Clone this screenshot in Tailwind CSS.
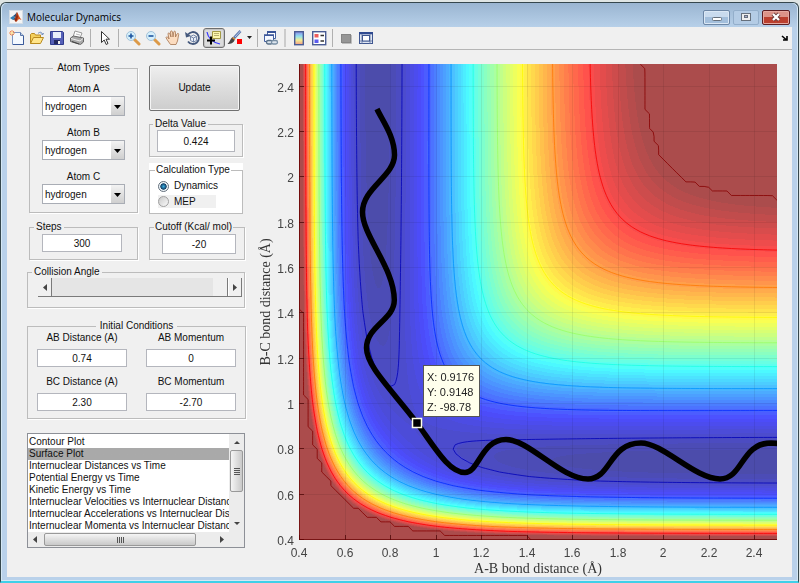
<!DOCTYPE html>
<html lang="en">
  <head>
    <meta charset="UTF-8" />
    <meta name="viewport" content="width=device-width, initial-scale=1.0" />
    <title>Molecular Dynamics</title>
    <script src="https://cdn.jsdelivr.net/npm/@tailwindcss/browser@4"></script>
  </head>
  <body class="bg-[#dfe5e4] font-['Liberation_Sans',Arial,sans-serif] text-[10px] leading-[14px] text-[#111]">
    <div class="flex h-screen flex-col pt-[2px] pr-px">
      <div class="flex flex-1 flex-col rounded-t-md border border-b-2 border-[#35474d] border-b-[#3fd0e8] bg-[#b9d1ea] px-[6px] pb-1 shadow-[inset_0_0_0_1px_#d5e8f5]">
        <!-- Title bar -->
        <header class="-mx-[5px] flex h-6 shrink-0 items-center gap-1 rounded-t-md bg-linear-to-b from-[#9ab5d1] to-[#b7d0e9] px-[7px] pt-[4px]">
          <svg class="h-[14px] w-[14px]" viewBox="0 0 14 14">
            <rect x=".5" y=".5" width="13" height="13" fill="#f4f4f4" stroke="#d5dde5" />
            <path d="M1 8l3-2 2 1-2 3z" fill="#2f7fb5" />
            <path d="M4 6l2-1.500L8 2l-1 5-1.500 3L4 10l2-3z" fill="#274d78" />
            <path d="M8 2c1.500 2 2 5 4.500 8L10 9l-3 3-1.500-2z" fill="#d9541e" />
            <path d="M8 2l1 5-2 5-1.500-2L7 7z" fill="#8e2a12" />
          </svg>
          <h1 class="grow font-['Open_Sans',sans-serif] text-[10px] text-black">Molecular Dynamics</h1>
          <div class="flex gap-[3px]">
            <button aria-label="Minimize" class="flex h-[15px] w-[27px] items-center justify-center rounded-xs border border-[#6d87a6] bg-linear-to-b from-[#c9dbee] from-50% to-[#a3bfdc] to-50% shadow-[inset_0_0_0_1px_#dbe8f5]">
              <svg class="h-[10px] w-3" viewBox="0 0 12 10"><rect x="1.500" y="5.500" width="9" height="3" rx="1" fill="#fff" stroke="#66707c" /></svg>
            </button>
            <button aria-label="Maximize" class="flex h-[15px] w-[26px] items-center justify-center rounded-xs border border-[#93aeca] bg-[#b4cce5]">
              <svg class="h-[10px] w-3" viewBox="0 0 12 10"><rect x="1.500" y="1.500" width="9" height="7" fill="#eee" stroke="#66707c" /><rect x="4.500" y="3.500" width="3" height="2" fill="#aac" stroke="#66707c" /></svg>
            </button>
            <button aria-label="Close" class="flex h-[15px] w-7 items-center justify-center rounded-xs border border-[#5c1d22] bg-linear-to-b from-[#dc9388] from-50% to-[#bb3f2e] to-50% shadow-[inset_0_0_0_1px_#e5a89f]">
              <svg class="h-[10px] w-3" viewBox="0 0 12 10"><path d="M3 2l6 6M9 2L3 8" stroke="#6a3a3a" stroke-width="4" /><path d="M3 2l6 6M9 2L3 8" stroke="#fff" stroke-width="2.300" /></svg>
            </button>
          </div>
        </header>

        <main class="flex min-h-0 flex-1 flex-col bg-[#f0f0f0]">
          <!-- Toolbar -->
          <nav class="flex h-[23px] shrink-0 items-center border-b border-[#b5b5b5]" aria-label="Tools">
            <button aria-label="New" class="flex h-5 w-5 items-center justify-center">
              <svg class="h-4 w-4" viewBox="0 0 16 16"><path d="M3.500 2.500h8l3 3v9h-11z" fill="#f4f9ff" stroke="#7a95c4" /><path d="M11.500 2.500v3h3" fill="#bcd" stroke="#5874a8" /><path d="M14.500 6v8.500H4" fill="none" stroke="#3b5a9a" /><path d="M3 0v6M0 3h6M1 1l4 4M5 1L1 5" stroke="#ee8a55" /><circle cx="3" cy="3" r="1.200" fill="#ffe8a0" /></svg>
            </button>
            <button aria-label="Open" class="flex h-5 w-5 items-center justify-center">
              <svg class="h-4 w-4" viewBox="0 0 16 16"><path d="M1.500 13.500v-9l1-1h3l1 1.500h5v3" fill="#f3cf5b" stroke="#b98a1f" /><path d="M1.500 13.500l3-6h10l-3 6z" fill="#ffe58a" stroke="#b98a1f" /><path d="M9 3.500c2-2 4-1.500 4.500 1M12 3.500l1.500 1.500 1-2" fill="none" stroke="#6a87b8" /></svg>
            </button>
            <button aria-label="Save" class="flex h-5 w-5 items-center justify-center">
              <svg class="h-4 w-4" viewBox="0 0 16 16"><path d="M1.500 1.500h12l1 1v12h-13z" fill="#5560b8" stroke="#303c8c" /><path d="M4 2h8v6H4z" fill="#e8effa" /><path d="M5 10h6v4H5z" fill="#23295f" /><path d="M9 11h2v3H9z" fill="#eee" /></svg>
            </button>
            <button aria-label="Print" class="flex h-5 w-5 items-center justify-center">
              <svg class="h-4 w-4" viewBox="0 0 16 16"><path d="M4 7l2-6 7 2-2 5z" fill="#fff" stroke="#999" /><path d="M1.500 8l3-2 10 2v4l-3 2.500-10-3z" fill="#a9a9a9" stroke="#666" /><path d="M2 8.500l9 2.500 3-2.500" fill="none" stroke="#ededed" /><path d="M3 11.500l7 2.500" stroke="#444" /><path d="M7 4l4 1" stroke="#bbb" /></svg>
            </button>
            <span class="mx-[3px] h-[18px] w-px bg-[#b0b0b0]"></span>
            <button aria-label="Select" class="flex h-5 w-5 items-center justify-center">
              <svg class="h-4 w-4" viewBox="0 0 16 16"><path d="M5.500 1.500v11l2.700-2.500 2 4.500 1.800-1-2-4.300h3.500z" fill="#fff" stroke="#333" /></svg>
            </button>
            <span class="mx-1 h-[18px] w-px bg-[#b0b0b0]"></span>
            <button aria-label="Zoom in" class="flex h-5 w-5 items-center justify-center">
              <svg class="h-4 w-4" viewBox="0 0 16 16"><path d="M9.500 9.500l4.500 4.500" stroke="#dc9a48" stroke-width="3" stroke-linecap="round" /><circle cx="6" cy="6" r="4.500" fill="#d6f0fb" stroke="#a3c2da" /><path d="M3.500 6h5M6 3.500v5" stroke="#1e55a0" stroke-width="1.600" /></svg>
            </button>
            <button aria-label="Zoom out" class="flex h-5 w-5 items-center justify-center">
              <svg class="h-4 w-4" viewBox="0 0 16 16"><path d="M9.500 9.500l4.500 4.500" stroke="#dc9a48" stroke-width="3" stroke-linecap="round" /><circle cx="6" cy="6" r="4.500" fill="#d6f0fb" stroke="#a3c2da" /><path d="M3.500 6h5" stroke="#1e55a0" stroke-width="1.600" /></svg>
            </button>
            <button aria-label="Pan" class="flex h-5 w-5 items-center justify-center">
              <svg class="h-4 w-4" viewBox="0 0 16 16"><path d="M5.500 14.500L2 9.500 1 7.500c.5-1 1.500-1 2.500.5L4 9 3 4c0-1.500 1.500-1.500 2 0l1 3-.5-5c0-1.500 1.700-1.500 2 0L8 7l.8-5c.2-1.300 1.800-1 1.700.3L10.500 7 12 4c.8-1.200 2-.5 1.700.6L12.500 11l-1.500 3.500z" fill="#fbdcc0" stroke="#a5734f" stroke-width=".8" /></svg>
            </button>
            <button aria-label="Rotate 3D" class="flex h-5 w-5 items-center justify-center">
              <svg class="h-4 w-4" viewBox="0 0 16 16"><path d="M3 4.500a6 6 0 1 1 0 7" fill="none" stroke="#44587c" stroke-width="1.800" /><path d="M0 2l1 5.500L6 6z" fill="#44587c" /><path d="M5.500 6.500L8.500 5l3 1.500v4l-3 1.500-3-1.500zM5.500 6.500l3 1.500 3-1.500M8.500 8v4" fill="#e8eef8" stroke="#5b7097" stroke-width=".8" /></svg>
            </button>
            <button aria-label="Data cursor" aria-pressed="true" class="flex h-5 w-[22px] items-center justify-center rounded-[3px] border border-[#6f6f6f] bg-[#dcdcdc] shadow-[inset_0_0_0_1px_#c4c4c4]">
              <svg class="h-4 w-4" viewBox="0 0 16 16"><path d="M6.500 1.500h8v7h-8z" fill="#fbf6ae" stroke="#a39a45" /><path d="M8 3.500h5M8 5.500h5" stroke="#b9b070" /><path d="M1 2c1 6 4 10 13 12" fill="none" stroke="#3535ff" stroke-width="1.200" /><path d="M5 6.500v8M1 10.500h8" stroke="#000" stroke-width="2" /></svg>
            </button>
            <button aria-label="Brush" class="flex h-5 w-5 items-center justify-center">
              <svg class="h-4 w-4" viewBox="0 0 16 16"><path d="M13.500 1L7 8" stroke="#5d79ae" stroke-width="2.600" /><path d="M13.500 1L8 7" stroke="#b9c9e6" /><path d="M8 9c-1 4-4 5-7.500 5C3 12 3 9 5.500 7z" fill="#444" /><path d="M6 7l2.500 2-1 1-2.500-2z" fill="#d58c3a" /><path d="M10 9h5v5h-5z" fill="#f00" /></svg>
            </button>
            <button aria-label="Brush options" class="flex h-5 w-[9px] items-center justify-center">
              <svg class="h-1 w-[5px]" viewBox="0 0 5 4"><path d="M0 0h5L2.500 3z" fill="#222" /></svg>
            </button>
            <span class="mx-[3px] h-[18px] w-px bg-[#b0b0b0]"></span>
            <button aria-label="Link plot" class="flex h-5 w-5 items-center justify-center">
              <svg class="h-4 w-4" viewBox="0 0 16 16"><path d="M4.500 2.500h8v6h-8z" fill="#fff" stroke="#4560a0" /><path d="M4 2h9" stroke="#3a5598" stroke-width="2" /><path d="M1.500 5.500h9v6h-9z" fill="#f5f8ff" stroke="#4560a0" /><path d="M1 5h10" stroke="#3a5598" stroke-width="1.500" /><rect x="3.500" y="10.500" width="6" height="3.500" rx="1.700" fill="#dde5ee" stroke="#5a7189" stroke-width="1.300" /><rect x="8.500" y="10.500" width="6" height="3.500" rx="1.700" fill="#dde5ee" stroke="#7990a5" stroke-width="1.300" /></svg>
            </button>
            <span class="mx-[3px] h-[18px] w-[2px] bg-[#cccccc]"></span>
            <button aria-label="Colorbar" class="flex h-5 w-5 items-center justify-center">
              <svg class="h-4 w-4" viewBox="0 0 16 16">
                <defs><linearGradient id="bar" x2="0" y2="1"><stop stop-color="#8a8ae8" /><stop offset=".35" stop-color="#8fe0ef" /><stop offset=".65" stop-color="#f3ee92" /><stop offset="1" stop-color="#f49a86" /></linearGradient></defs>
                <rect x="3.700" y="1.700" width="8.600" height="13" fill="url(#bar)" stroke="#4a5c94" stroke-width="1.400" />
              </svg>
            </button>
            <button aria-label="Legend" class="flex h-5 w-5 items-center justify-center">
              <svg class="h-4 w-4" viewBox="0 0 16 16"><rect x="1.700" y="1.700" width="13" height="13" fill="#fff" stroke="#4a5c94" stroke-width="1.400" /><path d="M3.500 4h4v3.500h-4z" fill="#ef5c5c" /><path d="M3.500 9.500h4V13h-4z" fill="#5c5cef" /><path d="M9.500 5.500H13M9.500 11H13" stroke="#333" stroke-width="1.300" /></svg>
            </button>
            <span class="mx-[3px] h-[18px] w-px bg-[#b0b0b0]"></span>
            <button aria-label="Hide plot tools" class="flex h-5 w-5 items-center justify-center">
              <svg class="h-4 w-4" viewBox="0 0 16 16"><rect x="3.500" y="4.500" width="9" height="8" fill="#969696" stroke="#858585" /><path d="M4 13.500h9.500V5" fill="none" stroke="#bdbdbd" /></svg>
            </button>
            <button aria-label="Show plot tools" class="flex h-5 w-5 items-center justify-center">
              <svg class="h-4 w-4" viewBox="0 0 16 16"><rect x="1.500" y="2.500" width="13" height="11" fill="#dfe6f3" stroke="#3f568f" /><path d="M1 3.200h14" stroke="#2e4990" stroke-width="2.200" /><path d="M4 4v9.500M12 4v9.500M2 11h12" stroke="#7485ad" /><rect x="4.500" y="5.500" width="7" height="5.500" fill="#fff" stroke="#3f568f" /></svg>
            </button>
            <button aria-label="Dock figure" class="mr-1 ml-auto">
              <svg class="h-[6px] w-[7px]" viewBox="0 0 7 6"><path d="M1 1l4 3.500M6 1v4H2" fill="none" stroke="#000" stroke-width="1.600" /></svg>
            </button>
          </nav>

          <div class="grid min-h-0 flex-1 grid-cols-[248px_1fr]">
            <!-- Settings -->
            <form class="flex flex-col pt-[11px] pl-5" onsubmit="return false">
              <div class="grid grid-cols-[109px_94px] gap-x-[11px] gap-y-[6px] pl-[2px]">
                <fieldset class="row-span-3 flex h-[152px] flex-col border border-[#bcbcbc] px-3 pt-[7px] shadow-[1px_1px_0_#fff]">
                  <legend class="mx-auto px-1">Atom Types</legend>
                  <div class="flex flex-col gap-[10px]">
                    <div class="flex flex-col">
                      <label for="atom-a" class="text-center">Atom A</label>
                      <div class="relative">
                        <select id="atom-a" class="h-5 w-full appearance-none border border-[#a9adb5] bg-white pt-[2px] pl-[2px]"><option>hydrogen</option></select>
                        <svg class="pointer-events-none absolute top-px right-px h-[18px] w-[13px] bg-linear-to-b from-[#f3f3f3] to-[#cfcfcf]" viewBox="0 0 13 18"><path d="M3 8h7l-3.500 4z" /></svg>
                      </div>
                    </div>
                    <div class="flex flex-col">
                      <label for="atom-b" class="text-center">Atom B</label>
                      <div class="relative">
                        <select id="atom-b" class="h-5 w-full appearance-none border border-[#a9adb5] bg-white pt-[2px] pl-[2px]"><option>hydrogen</option></select>
                        <svg class="pointer-events-none absolute top-px right-px h-[18px] w-[13px] bg-linear-to-b from-[#f3f3f3] to-[#cfcfcf]" viewBox="0 0 13 18"><path d="M3 8h7l-3.500 4z" /></svg>
                      </div>
                    </div>
                    <div class="flex flex-col">
                      <label for="atom-c" class="text-center">Atom C</label>
                      <div class="relative">
                        <select id="atom-c" class="h-5 w-full appearance-none border border-[#a9adb5] bg-white pt-[2px] pl-[2px]"><option>hydrogen</option></select>
                        <svg class="pointer-events-none absolute top-px right-px h-[18px] w-[13px] bg-linear-to-b from-[#f3f3f3] to-[#cfcfcf]" viewBox="0 0 13 18"><path d="M3 8h7l-3.500 4z" /></svg>
                      </div>
                    </div>
                  </div>
                </fieldset>
                <button class="mt-1 h-[46px] w-[91px] rounded-xs border border-[#707070] bg-linear-to-b from-[#efefef] via-[#dddddd] via-50% to-[#cdcdcd] shadow-[inset_0_0_0_1px_#f5f5f5]">Update</button>
                <fieldset class="h-10 border border-[#bcbcbc] px-[7px] shadow-[1px_1px_0_#fff]">
                  <legend class="-ml-1 px-[2px]"><label for="delta">Delta Value</label></legend>
                  <input id="delta" value="0.424" class="-mt-px block h-[22px] w-full border border-[#b4b6bd] bg-white text-center" />
                </fieldset>
                <div class="h-[51px] bg-white">
                  <fieldset class="h-[51px] border border-[#bcbcbc] px-2">
                    <legend class="-ml-[3px] px-px">Calculation Type</legend>
                    <label class="mt-px flex h-4 w-[62px] items-center gap-[5px]"><input type="radio" name="calc" checked class="h-[11px] w-[11px] appearance-none rounded-full border border-[#8c9096] bg-[#eef4f8] checked:border-[#64707c] checked:bg-[radial-gradient(#39b0e4,#123f66_45%,#eef4f8_55%)]" />Dynamics</label>
                    <label class="mt-px flex h-[13px] w-[58px] items-center gap-[5px] bg-[#f0f0f0]"><input type="radio" name="calc" class="h-[11px] w-[11px] appearance-none rounded-full border border-[#a0a0a0] bg-linear-to-br from-[#c9c9c9] to-[#fafafa]" />MEP</label>
                  </fieldset>
                </div>
                <fieldset class="h-10 border border-[#bcbcbc] px-3 shadow-[1px_1px_0_#fff]">
                  <legend class="-ml-2 px-[2px]"><label for="steps">Steps</label></legend>
                  <input id="steps" value="300" class="block h-[18px] w-20 border border-[#b4b6bd] bg-white text-center" />
                </fieldset>
                <fieldset class="h-10 border border-[#bcbcbc] px-2 shadow-[1px_1px_0_#fff]">
                  <legend class="-ml-1 px-px whitespace-nowrap"><label for="cutoff">Cutoff (Kcal/ mol)</label></legend>
                  <input id="cutoff" value="-20" class="ml-1 block h-5 w-[74px] border border-[#b4b6bd] bg-white text-center" />
                </fieldset>
              </div>

              <fieldset class="mt-[5px] h-[43px] w-[218px] border border-[#bcbcbc] pr-[2px] pl-[10px] shadow-[1px_1px_0_#fff]">
                <legend class="-ml-[6px] px-[2px]"><label for="angle">Collision Angle</label></legend>
                <div class="-mt-px flex h-[19px] border-b border-[#7a7a7a] bg-[#e5e5e5]">
                  <button aria-label="Decrease angle" class="flex w-[14px] items-center justify-center border-r border-[#7a7a7a] bg-[#f0f0f0]"><svg class="h-[7px] w-1" viewBox="0 0 4 7"><path d="M4 0v7L0 3.500z" fill="#444" /></svg></button>
                  <input id="angle" type="range" min="0" max="180" value="180" class="h-[18px] min-w-0 flex-1 appearance-none bg-transparent [&::-webkit-slider-thumb]:h-[18px] [&::-webkit-slider-thumb]:w-[15px] [&::-webkit-slider-thumb]:appearance-none [&::-webkit-slider-thumb]:border-r [&::-webkit-slider-thumb]:border-[#7a7a7a] [&::-webkit-slider-thumb]:bg-[#f0f0f0]" />
                  <button aria-label="Increase angle" class="flex w-[14px] items-center justify-center border-r border-l border-r-[#7a7a7a] border-l-white bg-[#f0f0f0]"><svg class="h-[7px] w-1" viewBox="0 0 4 7"><path d="M0 0v7l4-3.500z" fill="#444" /></svg></button>
                </div>
              </fieldset>

              <fieldset class="mt-[11px] h-[100px] w-[219px] border border-[#bcbcbc] px-[9px] shadow-[1px_1px_0_#fff]">
                <legend class="mx-auto px-1">Initial Conditions</legend>
                <div class="-mt-[2px] grid grid-cols-[90px_90px] gap-x-[19px] gap-y-2">
                  <label class="flex flex-col gap-1 text-center">AB Distance (A)<input value="0.74" class="h-[18px] w-full border border-[#b4b6bd] bg-white text-center" /></label>
                  <label class="flex flex-col gap-1 text-center">AB Momentum<input value="0" class="h-[18px] w-full border border-[#b4b6bd] bg-white text-center" /></label>
                  <label class="flex flex-col gap-1 text-center">BC Distance (A)<input value="2.30" class="h-[18px] w-full border border-[#b4b6bd] bg-white text-center" /></label>
                  <label class="flex flex-col gap-1 text-center">BC Momentum<input value="-2.70" class="h-[18px] w-full border border-[#b4b6bd] bg-white text-center" /></label>
                </div>
              </fieldset>

              <div class="mt-[14px] grid h-[115px] w-[218px] grid-cols-[1fr_15px] grid-rows-[1fr_15px] border border-[#8d9097] bg-white">
                <select size="8" aria-label="Plot type" class="min-w-0 appearance-none overflow-hidden bg-white pt-[2px] [&>option]:h-[12px] [&>option]:min-h-0 [&>option]:p-0 [&>option]:pl-px [&>option]:leading-[12px] [&>option:checked]:bg-[#a9a9a9] [&>option:checked]:bg-linear-to-r [&>option:checked]:from-[#a9a9a9] [&>option:checked]:to-[#a9a9a9]">
                  <option>Contour Plot</option>
                  <option selected>Surface Plot</option>
                  <option>Internuclear Distances vs Time</option>
                  <option>Potential Energy vs Time</option>
                  <option>Kinetic Energy vs Time</option>
                  <option>Internuclear Velocities vs Internuclear Distance</option>
                  <option>Internuclear Accelerations vs Internuclear Distance</option>
                  <option>Internuclear Momenta vs Internuclear Distance</option>
                </select>
                <div class="flex flex-col items-center bg-[#ececec]">
                  <svg class="h-[16px] w-[15px] shrink-0" viewBox="0 0 15 16"><path d="M5 10h6L8 7z" fill="#444" /></svg>
                  <div class="flex h-[42px] w-[13px] flex-col items-center justify-center gap-px rounded-xs border border-[#999] bg-linear-to-r from-[#f5f5f5] to-[#c9c9c9]">
                    <i class="h-px w-[6px] bg-[#555]"></i><i class="h-px w-[6px] bg-[#555]"></i><i class="h-px w-[6px] bg-[#555]"></i><i class="h-px w-[6px] bg-[#555]"></i>
                  </div>
                  <svg class="mt-auto h-[15px] w-[15px]" viewBox="0 0 15 15"><path d="M5 5h6l-3 3z" fill="#444" /></svg>
                </div>
                <div class="flex items-center bg-[#ececec]">
                  <svg class="h-[15px] w-4" viewBox="0 0 16 15"><path d="M9 4v7L5 7.500z" fill="#444" /></svg>
                  <div class="flex h-[13px] w-[152px] items-center justify-center gap-px rounded-xs border border-[#999] bg-linear-to-b from-[#f5f5f5] to-[#c9c9c9]">
                    <i class="h-[6px] w-px bg-[#555]"></i><i class="h-[6px] w-px bg-[#555]"></i><i class="h-[6px] w-px bg-[#555]"></i><i class="h-[6px] w-px bg-[#555]"></i>
                  </div>
                  <svg class="ml-auto h-[15px] w-4" viewBox="0 0 16 15"><path d="M7 4v7l4-3.500z" fill="#444" /></svg>
                </div>
                <div class="bg-[#ececec]"></div>
              </div>
            </form>

            <!-- Surface plot -->
            <svg class="h-full w-full" viewBox="0 0 537 527" role="img" aria-label="Potential energy surface">
              <foreignObject x="44" y="14" width="478" height="476">
                <canvas id="surface" width="478" height="476" class="block"></canvas>
              </foreignObject>
              <g id="axes" class="fill-[#444] stroke-none text-[12px]"></g>
              <!-- Trajectory -->
              <svg x="44" y="14" width="478" height="476">
                <path
                  d="M78 45C83 56 95.500 72 95.500 91C95.500 112 63.500 124 63.500 148C63.500 172 95.300 204 95.300 236C95.300 256 67.500 262 67.500 284C67.500 302 92 325 118 359C136 384 150 408.500 166 408.500C180 408.500 182 375.500 207 375.500C230 375.500 262 415 289 415C312 415 310 379 342 379C364 379 396 415 421 415C444 415 442 379 472 379L480 379.500"
                  fill="none"
                  stroke="#000"
                  stroke-width="5.500"
                />
              </svg>
              <rect x="157.500" y="368.500" width="9" height="9" fill="#000" stroke="#ffffe6" stroke-width="1.500" />
              <rect x="168.500" y="315.500" width="56" height="51" fill="#ffffec" stroke="#555" />
              <g class="fill-[#222] text-[11px]">
                <text x="172" y="331">X: 0.9176</text>
                <text x="172" y="346">Y: 0.9148</text>
                <text x="172" y="361">Z: -98.78</text>
              </g>
              <g class="fill-[#333] font-['Liberation_Serif',serif] text-[14px]" text-anchor="middle">
                <text x="283" y="523">A-B bond distance (Å)</text>
                <text transform="translate(15 252) rotate(-90)">B-C bond distance (Å)</text>
              </g>
            </svg>
          </div>
        </main>
      </div>
    </div>

    <script>
      const W = 478, H = 476, MIN = 0.4, MAX = 2.5, CUTOFF = -22.4, FLOOR = -109.5;

      // LEPS potential for collinear H + H2, kcal/mol
      const D = 109.5, BETA = 1.942, RE = 0.7417, SATO = 0.18;
      function pair(r) {
        const e = Math.exp(-BETA * (r - RE));
        const f = D / (4 * (1 + SATO));
        return [
          f * ((3 + SATO) * e * e - (2 + 6 * SATO) * e),
          f * ((1 + 3 * SATO) * e * e - (6 + 2 * SATO) * e),
        ];
      }
      function leps(x, y) {
        const [q1, a] = pair(x), [q2, b] = pair(y), [q3, c] = pair(x + y);
        const v = q1 + q2 + q3 - Math.sqrt(((a - b) ** 2 + (b - c) ** 2 + (a - c) ** 2) / 2);
        return Math.min(v, CUTOFF);
      }

      const clamp = (v) => Math.max(0, Math.min(1, v));
      function jet(v) {
        const t = (Math.floor(clamp((v - FLOOR) / (CUTOFF - FLOOR)) * 63.99) + 0.5) / 64;
        return [3, 2, 1].map((k) => clamp(1.5 - Math.abs(4 * t - k)));
      }

      const ctx = document.getElementById("surface").getContext("2d");
      const image = ctx.createImageData(W, H);
      for (let j = 0; j < H; j++) {
        for (let i = 0; i < W; i++) {
          const x = MIN + ((i + 0.5) / W) * (MAX - MIN);
          const y = MAX - ((j + 0.5) / H) * (MAX - MIN);
          const c = jet(leps(x, y));
          for (let k = 0; k < 3; k++) image.data[(j * W + i) * 4 + k] = 76 + 179 * c[k];
          image.data[(j * W + i) * 4 + 3] = 255;
        }
      }
      ctx.putImageData(image, 0, 0);

      // Contours by marching squares on a 0.02 grid
      const N = 105, grid = [];
      for (let j = 0; j <= N; j++) {
        grid.push([]);
        for (let i = 0; i <= N; i++) grid[j].push(leps(MIN + i * 0.02, MIN + j * 0.02));
      }
      function contour(level) {
        ctx.beginPath();
        for (let j = 0; j < N; j++) {
          for (let i = 0; i < N; i++) {
            const p = [[i, j], [i + 1, j], [i + 1, j + 1], [i, j + 1]];
            const hits = [];
            p.forEach((a, n) => {
              const b = p[(n + 1) % 4];
              const va = grid[a[1]][a[0]], vb = grid[b[1]][b[0]];
              if (va < level === vb < level) return;
              const t = (level - va) / (vb - va);
              hits.push([((a[0] + t * (b[0] - a[0])) / N) * W, H - ((a[1] + t * (b[1] - a[1])) / N) * H]);
            });
            for (let n = 0; n + 1 < hits.length; n += 2) {
              ctx.moveTo(...hits[n]);
              ctx.lineTo(...hits[n + 1]);
            }
          }
        }
        const [r, g, b] = jet(level).map((c) => Math.round(c * 255));
        ctx.strokeStyle = `rgba(${r},${g},${b},0.8)`;
        ctx.stroke();
      }
      [0.853, 0.971, 1.068, 1.165, 1.27, 1.382, 1.514, 1.679].forEach((x) => contour(leps(x, 2.5)));
      contour(CUTOFF - 0.001);

      // Grid, ticks and tick labels
      let axes = "";
      for (let k = 0; k <= 10; k++) {
        const value = +(0.4 + k * 0.2).toFixed(1);
        const d = (k * 0.2) / (MAX - MIN);
        const x = Math.round(44 + d * W), y = Math.round(490 - d * H);
        axes += `<path d="M${x + 0.5} 14v476M44 ${y - 0.5}h478" stroke="#000" stroke-opacity="0.07"/>`;
        axes += `<path d="M${x + 0.5} 490v-5M44 ${y - 0.5}h5" stroke="#400" stroke-opacity="0.7"/>`;
        axes += `<text x="${x}" y="507" text-anchor="middle">${value}</text>`;
        axes += `<text x="39" y="${y + 5}" text-anchor="end">${value}</text>`;
      }
      axes += `<path d="M44.500 14v475.500H522" fill="none" stroke="#600" stroke-opacity="0.7"/>`;
      document.getElementById("axes").innerHTML = axes;
    </script>
  </body>
</html>
